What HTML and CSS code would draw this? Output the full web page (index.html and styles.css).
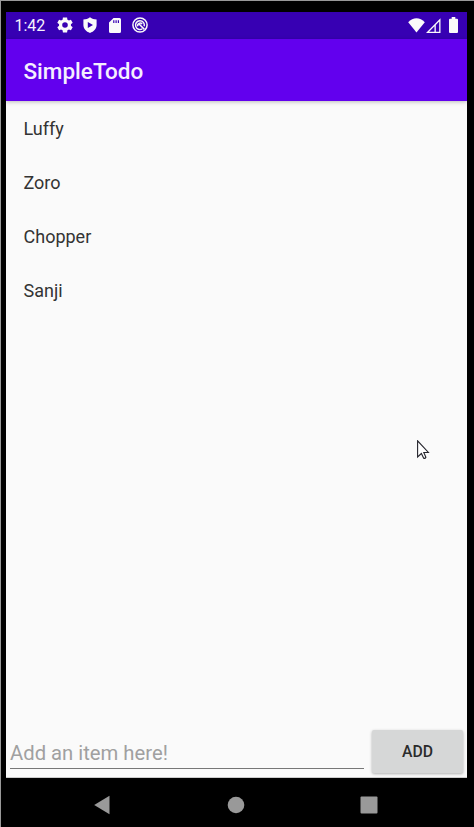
FILE: index.html
```html
<!DOCTYPE html>
<html lang="en">
<head>
<meta charset="utf-8">
<title>SimpleTodo</title>
<link rel="stylesheet" href="styles.css">
</head>
<body>
<div class="device">
  <div class="screen">
    <header class="status">
      <span class="clock">1:42</span>
      <svg class="gear" width="16" height="16" viewBox="2 2 20 20"><path fill-rule="evenodd" d="M19.400 13a7.500 7.500 0 0 0 0-2l2.200-1.700-2.200-3.800-2.600 1a8 8 0 0 0-1.800-1L14.600 2.500H9.400L9 5.500a8 8 0 0 0-1.800 1l-2.600-1-2.200 3.800L4.600 11a7.500 7.500 0 0 0 0 2l-2.200 1.700 2.200 3.800 2.600-1a8 8 0 0 0 1.800 1l.4 3h5.200l.4-3a8 8 0 0 0 1.800-1l2.600 1 2.200-3.800zM12 8.500a3.500 3.500 0 1 1 0 7 3.500 3.500 0 0 1 0-7z"/></svg>
      <svg class="shield" width="14" height="16" viewBox="0 0 14 16"><path fill-rule="evenodd" d="M7 .2C5 1.700 3 2.400.4 2.500V8c0 3.600 2.600 6.700 6.600 7.900 4-1.200 6.600-4.300 6.600-7.900V2.500C11 2.400 9 1.700 7 .2zM4.800 4.900 10 8l-5.200 3.100z"/></svg>
      <svg class="card" width="12" height="15" viewBox="0 0 12 15"><path fill-rule="evenodd" d="M4.500 0H10.500Q12 0 12 1.500V13.500Q12 15 10.500 15H1.500Q0 15 0 13.500V4.500zM4.200 2.200V5h1.200V2.200zm2.300 0V5h1.200V2.200zm2.300 0V5H10V2.200z"/></svg>
      <svg class="dial" width="16" height="16" viewBox="0 0 16 16"><g class="line"><circle cx="8" cy="8" r="7.100"/><path d="M10.300 11.800A4.400 4.400 0 1 1 12.200 9.200M5.800 9.200a2.400 2.400 0 0 1 4.300-2M6.800 6.800l5.600 5.600"/></g></svg>
      <svg class="wifi" width="17" height="15" viewBox="0 0 17 15"><path d="M.2 4.200C5-1 12-1 16.800 4.200L8.500 14.600z"/></svg>
      <svg class="signal" width="15" height="15" viewBox="0 0 15 15"><path fill-rule="evenodd" d="M0 15 14.500.2V15zM3.100 13.700H8.500V8.200zM9.800 6.900V13.700h3.400V3.400z"/></svg>
      <svg class="battery" width="9" height="16" viewBox="0 0 9 16"><path d="M2.700 0h3.600v1.800H8q1 0 1 1V15q0 1-1 1H1q-1 0-1-1V2.800q0-1 1-1h1.700z"/></svg>
    </header>
    <div class="appbar"><h1>SimpleTodo</h1></div>
    <ul class="list">
      <li>Luffy</li>
      <li>Zoro</li>
      <li>Chopper</li>
      <li>Sanji</li>
    </ul>
    <div class="composer">
      <div class="field">Add an item here!</div>
      <button class="add">ADD</button>
    </div>
  </div>
  <nav class="nav">
    <svg width="18" height="20" viewBox="0 0 18 20"><path d="M16.500.7V19.300L1.200 10z"/></svg>
    <svg width="18" height="18" viewBox="0 0 18 18"><circle cx="9" cy="9" r="8.300"/></svg>
    <svg width="18" height="18" viewBox="0 0 18 18"><rect x=".5" y=".5" width="17" height="17" rx="1"/></svg>
  </nav>
  <svg class="cursor" width="13" height="20" viewBox="0 0 13 20"><path d="M.6.800V17L4.400 13.500 6.700 18.200Q8.200 18.800 8.900 17.200L6.800 12.500H11.400z"/></svg>
</div>
</body>
</html>
```
FILE: styles.css
```css
* { box-sizing: border-box; }
body { margin: 0; font-family: Roboto, sans-serif; }
svg { display: block; flex: none; }
.device {
  position: relative;
  width: 474px;
  height: 827px;
  padding: 11px 7px 0 5px;
  background: #000;
  border-top: 1px solid #999;
  border-left: 1px solid #999;
  overflow: hidden;
}
.screen {
  display: flex;
  flex-direction: column;
  height: 766px;
  background: #fafafa;
  border-bottom: 1px solid #ccc;
}
.status {
  display: flex;
  align-items: center;
  height: 26.500px;
  padding: 0 9px 0 8.500px;
  background: #3700b3;
  color: #f6f2fc;
  flex: none;
}
.status svg { fill: #fafafa; }
.clock { width: 42.500px; font-size: 16px; line-height: 25px; padding-top: 1px; }
.shield { margin-left: 10px; }
.card { margin-left: 12px; }
.dial { margin-left: 11px; }
.dial .line { fill: none; stroke: #fafafa; stroke-width: 1.500; }
.wifi { margin-left: auto; }
.signal { margin-left: 1px; }
.battery { margin-left: 8px; }
.appbar {
  display: flex;
  align-items: center;
  height: 62.500px;
  padding-left: 17.500px;
  background: #6200ee;
  box-shadow: 0 1px 4px rgba(0, 0, 0, .25);
  flex: none;
}
h1 { margin: 0; padding-top: 2px; font-size: 22.500px; font-weight: 500; color: #f5effe; }
.list { flex: 1; margin: 0; padding: 0 0 0 17.500px; list-style: none; }
.list li { height: 54px; line-height: 55px; font-size: 18px; color: #333; }
.composer { display: flex; height: 51px; padding: 0 4px; flex: none; }
.field {
  width: 354px;
  height: 43px;
  border-bottom: 1px solid #777;
  font-size: 20.250px;
  line-height: 54px;
  color: #a0a0a0;
}
.add {
  width: 91px;
  height: 43px;
  margin: 4px 0 0 8px;
  padding: 0;
  border: 0;
  border-radius: 2px;
  background: #d6d7d7;
  box-shadow: 0 1px 3px rgba(0, 0, 0, .3);
  font: 500 15.750px Roboto, sans-serif;
  color: #2b2b2b;
}
.nav {
  display: flex;
  align-items: center;
  justify-content: space-between;
  height: 53px;
  padding: 0 89px 0 87px;
}
.nav svg { fill: #999; }
.cursor { position: absolute; left: 416px; top: 439px; }
.cursor path { fill: #fff; stroke: #24242c; stroke-width: 1.100; }
```
